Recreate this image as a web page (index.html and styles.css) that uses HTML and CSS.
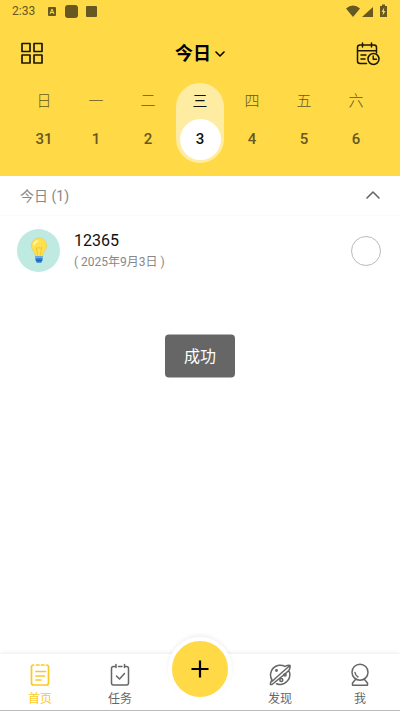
FILE: index.html
```html
<!DOCTYPE html>
<html lang="zh-CN">
<head>
<meta charset="utf-8">
<meta name="viewport" content="width=device-width, initial-scale=1">
<title>今日</title>
<link rel="stylesheet" href="styles.css">
</head>
<body>
<header class="header">
  <div class="status">
    <span class="clock">2:33</span>
    <svg class="status-left" width="52" height="16" viewBox="0 0 52 16" aria-hidden="true">
      <rect x="1" y="4" width="8" height="9" rx="1"/>
      <path class="cut" d="M3 11 5 6l2 5M4 9.500h2"/>
      <rect x="18" y="2" width="13" height="13" rx="3"/>
      <rect x="39" y="3" width="11" height="11" rx="1"/>
    </svg>
    <svg class="status-right" width="42" height="16" viewBox="0 0 42 16" aria-hidden="true">
      <path d="M0 5.500Q7-.5 14 5.500L7 14Z"/>
      <path d="M27 4v10H16Z"/>
      <path d="M34 3h2V1.500h3V3h2v11h-7Z"/>
      <path class="bolt" d="m38.200 4.500-2.700 4.500H37l-.4 3.500 2.900-4.500h-1.700Z"/>
    </svg>
  </div>
  <div class="toolbar">
    <button class="icon-button" type="button" aria-label="视图">
      <svg width="24" height="24" viewBox="0 0 24 24"><path d="M2 1.500h8v8H2ZM14 1.500h8v8h-8ZM2 13h8v8H2ZM14 13h8v8h-8Z" stroke-width="1.700"/></svg>
    </button>
    <button class="title" type="button">今日
      <svg width="10" height="8" viewBox="0 0 10 8"><path d="m1 2 4 4 4-4" stroke-width="1.600"/></svg>
    </button>
    <button class="icon-button" type="button" aria-label="日历">
      <svg width="24" height="24" viewBox="0 0 24 24"><path d="M10.500 21.500H4q-2.500 0-2.500-2.500V5.500Q1.500 3 4 3h14q2.500 0 2.500 2.500V11M1.500 8.700h19M6.500 1v4M15.500 1v4M5 13h5M5 17h4" stroke-width="1.500"/><circle cx="17.500" cy="17" r="5.500" stroke-width="1.500"/><path d="M17.200 14v3.300h3.300" stroke-width="1.400"/></svg>
    </button>
  </div>
  <div class="week">
    <button class="day" type="button"><span class="name">日</span><span class="date">31</span></button>
    <button class="day" type="button"><span class="name">一</span><span class="date">1</span></button>
    <button class="day" type="button"><span class="name">二</span><span class="date">2</span></button>
    <button class="day selected" type="button"><span class="name">三</span><span class="date">3</span></button>
    <button class="day" type="button"><span class="name">四</span><span class="date">4</span></button>
    <button class="day" type="button"><span class="name">五</span><span class="date">5</span></button>
    <button class="day" type="button"><span class="name">六</span><span class="date">6</span></button>
  </div>
</header>
<main class="main">
  <button class="section" type="button">今日 (1)
    <svg width="14" height="10" viewBox="0 0 14 10"><path d="m1 8 6-6 6 6" stroke-width="1.600"/></svg>
  </button>
  <div class="task">
    <span class="avatar">
      <svg width="18" height="28" viewBox="0 0 20 30" aria-hidden="true">
        <path d="M6 21Q6 18 3.500 14.500Q1.500 12 1.500 9a8.500 8.500 0 0 1 17 0q0 3-2 5.500Q14 18 14 21Z" fill="#ffe14d" stroke="#eac94b" stroke-width=".7"/>
        <path d="M4.500 8a5 5 0 0 1 4-4" fill="none" stroke="#fff5b0" stroke-width="2" stroke-linecap="round"/>
        <path d="M8.500 20 7 11q1.500 2 3 0 1.500 2 3 0L11.500 20" fill="none" stroke="#efc43c" stroke-width="1"/>
        <path d="M6 20.500h8v4.500L12.500 28h-5L6 25Z" fill="#2f7fd3"/>
        <path d="M6 21h8v1.500H6Z" fill="#8dc3ed"/>
        <path d="M7 25.500h6" stroke="#195ba8" stroke-width="1"/>
      </svg>
    </span>
    <label class="task-text" for="done"><span class="task-name">12365</span><span class="task-date">( 2025年9月3日 )</span></label>
    <input class="check" id="done" type="checkbox">
  </div>
</main>
<div class="toast" role="status">成功</div>
<nav class="nav">
  <a class="tab active" href="#home">
    <svg width="24" height="24" viewBox="0 0 24 24"><path d="M5.500 2H5.500Q3.500 2 3.500 4V20q0 2 2 2h13q2 0 2-2V4q0-2-2-2M8.500 2h2.500M13.500 2h2.500M8 8.500h9.500M8 13h8.500M8 17h5" stroke-width="1.700"/></svg>
    <span>首页</span>
  </a>
  <a class="tab" href="#tasks">
    <svg width="24" height="24" viewBox="0 0 24 24"><path d="M8 1.500v3M16.500 1.500v3M10.500 3.500h3.500M8 3.500H5.500Q3.500 3.500 3.500 5.500V20q0 2 2 2h13q2 0 2-2V5.500q0-2-2-2h-2M8.500 13l3 3 5-5.500" stroke-width="1.500"/></svg>
    <span>任务</span>
  </a>
  <div class="add-slot"><button class="add" type="button" aria-label="添加">
    <svg width="20" height="20" viewBox="0 0 20 20"><path d="M1.500 10h17M10 1.500v17" stroke-width="2.200"/></svg>
  </button></div>
  <a class="tab" href="#discover">
    <svg width="24" height="24" viewBox="0 0 24 24"><path d="M17 3.400A9.700 9.700 0 0 0 4 17M20.800 7.500A9.700 9.700 0 0 1 8.500 20.700M17 3.400Q20.500 2 22 2.500q.5 2-1.200 5Q16.500 11.500 4 21.500L2.500 21.500Q2 20 4 17M21.500 3Q16 7.500 4.500 18" stroke-width="1.500"/><circle cx="8.500" cy="7.500" r=".7" stroke-width="1.500"/><circle cx="17" cy="11.800" r="1.100" stroke-width="1.500"/><circle cx="13.300" cy="17" r="1.500" stroke-width="1.500"/></svg>
    <span>发现</span>
  </a>
  <a class="tab" href="#me">
    <svg width="24" height="24" viewBox="0 0 24 24"><circle cx="12" cy="9.200" r="8" stroke-width="1.500"/><path d="M7.500 16.500 4.500 20v2.200h15V20l-3-3.500M7 9.500q.3 3 3 4.500" stroke-width="1.500"/></svg>
    <span>我</span>
  </a>
</nav>
</body>
</html>
```

FILE: styles.css
```css
* {
  box-sizing: border-box;
}

body {
  margin: 0;
  min-height: 100vh;
  display: flex;
  flex-direction: column;
  background: #fff;
  color: #111;
  font-family: Roboto, "Noto Sans CJK SC", sans-serif;
}

button {
  padding: 0;
  border: 0;
  background: none;
  color: inherit;
  font: inherit;
}

svg {
  display: block;
}

button svg,
.tab svg {
  fill: none;
  stroke: currentColor;
  stroke-linecap: round;
  stroke-linejoin: round;
}

.icon-button {
  color: #1c1804;
}

.header {
  padding-bottom: 13px;
  background: #ffd946;
}

.status {
  display: flex;
  align-items: center;
  gap: 12px;
  height: 22px;
  padding: 0 12px;
  color: #655822;
  font-size: 12px;
}

.status svg {
  fill: currentColor;
}

.status .cut {
  fill: none;
  stroke: #ffd946;
}

.status .bolt {
  fill: #ffd946;
}

.status-right {
  margin-left: auto;
}

.toolbar {
  display: flex;
  align-items: center;
  justify-content: space-between;
  height: 61px;
  padding: 2px 20px 0;
}

.title {
  display: flex;
  align-items: center;
  gap: 4px;
  color: #000;
  font-size: 18px;
  font-weight: 700;
  line-height: 24px;
}

.week {
  display: grid;
  grid-template-columns: repeat(7, 1fr);
  padding: 0 18px;
}

.day {
  display: flex;
  flex-direction: column;
  align-items: center;
  justify-self: center;
  width: 48px;
  height: 80px;
  padding-bottom: 3px;
  border-radius: 24px;
  color: #655822;
  font-size: 15px;
}

.name {
  height: 36px;
  line-height: 36px;
  font-weight: 300;
}

.date {
  width: 41px;
  height: 41px;
  border-radius: 50%;
  line-height: 41px;
  font-weight: 500;
}

.selected {
  background: #ffeca3;
  color: #111;
}

.selected .name {
  font-weight: 400;
}

.selected .date {
  background: #fff;
}

.main {
  flex: 1;
}

.section {
  display: flex;
  align-items: center;
  justify-content: space-between;
  width: 100%;
  height: 40px;
  padding: 0 20px 2px;
  border-bottom: 1px solid #fafafa;
  color: #888;
  font-size: 14px;
}

.section svg {
  color: #666;
}

.task {
  display: flex;
  align-items: center;
  gap: 14px;
  padding: 13px 19px 13px 17px;
}

.avatar {
  display: grid;
  place-items: center;
  width: 43px;
  height: 43px;
  border-radius: 50%;
  background: #bfeae2;
}

.task-text {
  display: flex;
  flex: 1;
  flex-direction: column;
}

.task-name {
  font-size: 16px;
  line-height: 22px;
}

.task-date {
  color: #888;
  font-size: 12px;
  line-height: 20px;
}

.check {
  appearance: none;
  width: 30px;
  height: 30px;
  margin: 0;
  border: 1px solid #bbb;
  border-radius: 50%;
}

.check:checked {
  background: #ffd946;
}

.toast {
  position: fixed;
  top: 50%;
  left: 50%;
  transform: translate(-50%, -50%);
  padding: 10px 19px 9px;
  border-radius: 4px;
  background: #666;
  color: #fff;
  font-size: 16px;
  line-height: 24px;
}

.nav {
  position: sticky;
  bottom: 0;
  display: grid;
  grid-template-columns: repeat(5, 1fr);
  height: 57px;
  border-bottom: 1px solid #bbb;
  background: #fff;
  box-shadow: 0 -1px 4px #00000014;
}

.tab {
  display: flex;
  flex-direction: column;
  align-items: center;
  gap: 2px;
  padding-top: 9px;
  color: #666;
  font-size: 12px;
  line-height: 20px;
  text-decoration: none;
}

.active {
  color: #fbc926;
}

.add-slot {
  display: flex;
  justify-content: center;
}

.add {
  display: grid;
  place-items: center;
  width: 64px;
  height: 64px;
  margin-top: -17px;
  border: 4px solid #fff;
  border-radius: 50%;
  background: #ffd946;
  box-shadow: 0 -2px 4px #0000000f;
  color: #000;
}

.add svg {
  stroke-linecap: butt;
}
```
